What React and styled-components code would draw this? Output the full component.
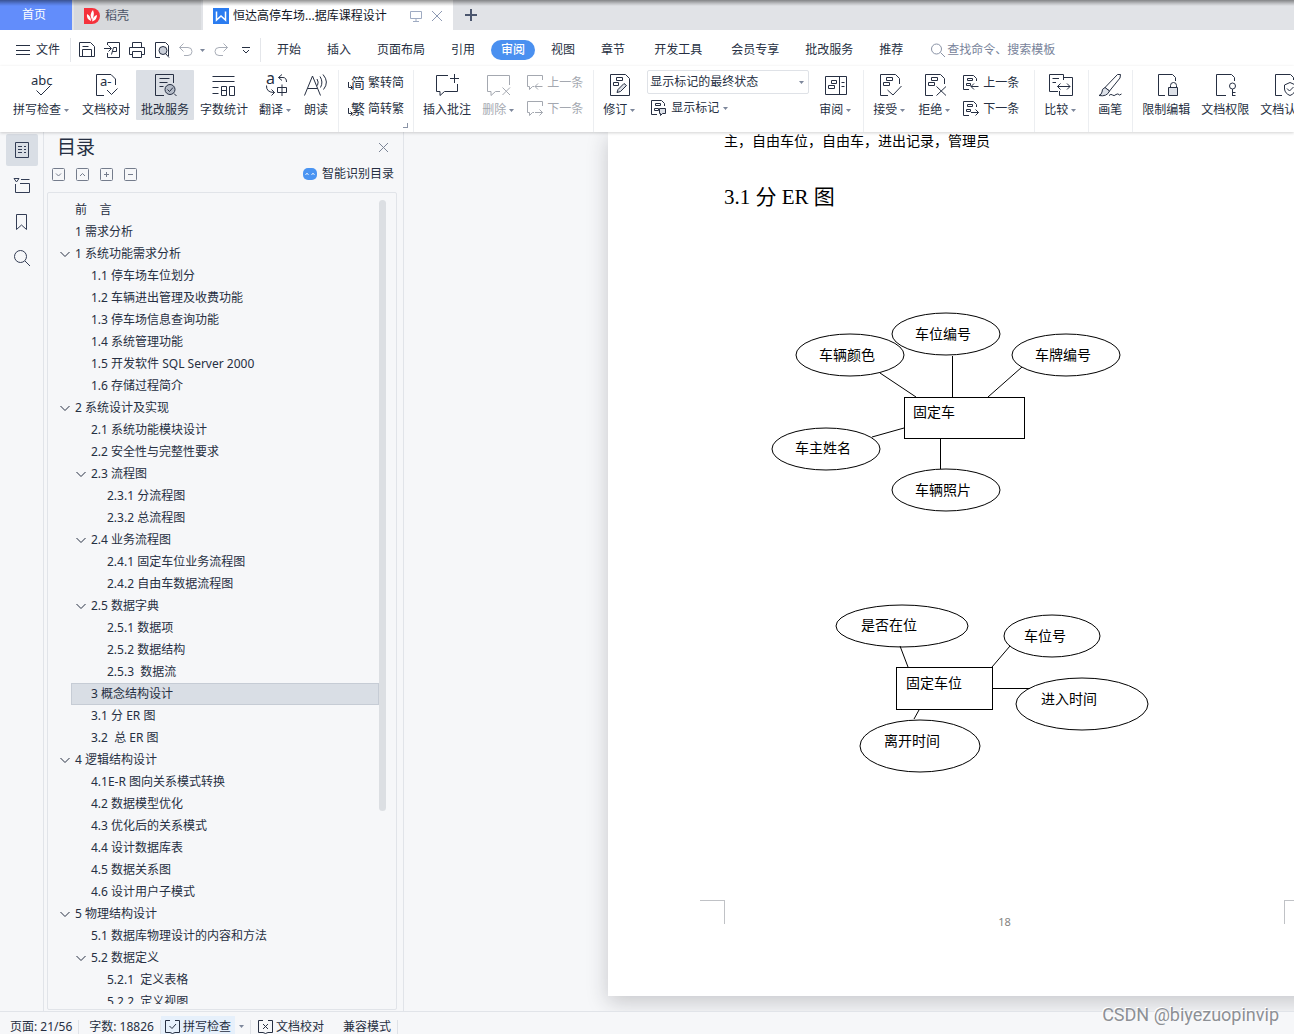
import React from "react";
import styled, { createGlobalStyle } from "styled-components";

const GlobalStyle = createGlobalStyle`
  * {
    box-sizing: border-box;
  }
  body {
    margin: 0;
    overflow: hidden;
    background: #f6f7f9;
    color: #262f42;
    font-family: "Noto Sans", "Noto Sans CJK SC", sans-serif;
    font-size: 12px;
    line-height: 16px;
  }
  button, input, select {
    font: inherit;
    color: inherit;
    border: 0;
    padding: 0;
    background: none;
  }
  button {
    white-space: nowrap;
    cursor: pointer;
  }
  svg {
    display: block;
    flex: none;
    overflow: visible;
  }
`;

const Window = styled.div`
  display: flex;
  flex-direction: column;
  height: 100vh;
  position: relative;
`;

/* ---------- title tabs ---------- */

const TabBar = styled.div`
  display: flex;
  flex: none;
  gap: 2px;
  height: 30px;
  background: #e1e3e7;
  position: relative;
`;
const TopShade = styled.div`
  position: absolute;
  top: 0;
  left: 0;
  right: 0;
  height: 6px;
  pointer-events: none;
  background: linear-gradient(rgba(0, 0, 0, 0.42), rgba(0, 0, 0, 0.15) 60%, transparent);
`;
const HomeTab = styled.button`
  width: 72px;
  padding-right: 4px;
  color: #fff;
  background: #628dfb;
`;
const Tab = styled.button`
  display: flex;
  align-items: center;
  gap: ${(p) => (p.$active ? 4 : 5)}px;
  width: ${(p) => (p.$active ? 250 : 127)}px;
  padding: 2px 10px 0;
  color: ${(p) => (p.$active ? "#10151f" : "#4a5266")};
  background: ${(p) => (p.$active ? "#fff" : "#d7d9dc")};
`;
const TabTools = styled.span`
  display: flex;
  gap: 9px;
  margin-left: auto;
`;
const NewTab = styled.button`
  padding: 0 10px;
`;

/* ---------- menu row ---------- */

const MenuBar = styled.div`
  display: flex;
  align-items: center;
  flex: none;
  height: 36px;
  padding: 4px 0 0 16px;
  background: #fff;
`;
const FileButton = styled.button`
  display: flex;
  align-items: center;
  gap: 6px;
  padding-right: 10px;
`;
const MenuDivider = styled.span`
  width: 1px;
  height: 24px;
  background: #e4e6ea;
`;
const QuickTools = styled.div`
  display: flex;
  align-items: center;
  gap: 9px;
  width: 189px;
  padding-left: 8px;
`;
const UndoGroup = styled.span`
  display: flex;
  align-items: center;
  gap: 7px;
`;
const MenuTabs = styled.nav`
  display: flex;
  align-items: center;
  padding-left: 3px;
`;
const MenuTab = styled.button`
  height: 20px;
  margin: 0 ${(p) => (p.$wide ? 3 : 0)}px;
  padding: 0 13px;
`;
const ActiveMenuTab = styled(MenuTab)`
  margin: 0 3px;
  padding: 0 10px;
  border-radius: 10px;
  color: #fff;
  font-weight: 500;
  background: #4a90f0;
`;
const Search = styled.label`
  display: flex;
  align-items: center;
  gap: 2px;
  padding-left: 15px;
  color: #8a93a6;
  input {
    width: 140px;
    outline: none;
  }
  input::placeholder {
    color: #78839a;
    opacity: 1;
  }
`;

/* ---------- ribbon ---------- */

const Ribbon = styled.div`
  display: flex;
  flex: none;
  gap: 1px;
  height: 66px;
  padding: 4px 0 0 8px;
  background: #fff;
  box-shadow: 0 1px 3px rgba(0, 0, 0, 0.18);
  position: relative;
  z-index: 1;
  > * {
    flex: none;
  }
`;
const BigButton = styled.button`
  display: flex;
  flex-direction: column;
  align-items: center;
  gap: 5px;
  height: 50px;
  padding: 3px 5px 0;
  border-radius: 1px;
  color: ${(p) => (p.$muted ? "#a4a8b0" : "inherit")};
  background: ${(p) => (p.$active ? "#dbdfe5" : "none")};
`;
const ButtonLabel = styled.span`
  display: flex;
  align-items: center;
  gap: 3px;
  padding-right: ${(p) => (p.$menu ? 2 : 0)}px;
`;
const Divider = styled.span`
  width: 1px;
  height: 62px;
  margin: 0 3px 0 4px;
  background: #eceef1;
`;
const Stack = styled.div`
  display: flex;
  flex-direction: column;
  gap: ${(p) => p.$gap || 0}px;
  padding-right: ${(p) => (p.$wide ? 5 : 0)}px;
`;
const SmallButton = styled.button`
  display: flex;
  align-items: center;
  gap: 4px;
  height: 26px;
  padding: 0 5px 0 ${(p) => (p.$indent ? 8 : 5)}px;
  color: ${(p) => (p.$muted ? "#a4a8b0" : "inherit")};
`;
const SelectBox = styled.div`
  display: flex;
  align-items: center;
  width: 162px;
  height: 24px;
  margin: 0 4px;
  padding-right: 4px;
  border: 1px solid #dfe2e7;
  border-radius: 2px;
  select {
    flex: 1;
    padding-left: 2px;
    appearance: none;
    outline: none;
  }
`;
const Launcher = styled.span`
  align-self: flex-end;
  width: 5px;
  height: 5px;
  margin: 0 0 4px -7px;
  border: solid #8a93a6;
  border-width: 0 1px 1px 0;
`;

/* ---------- work area ---------- */

const Workspace = styled.div`
  display: flex;
  flex: 1;
  min-height: 0;
`;
const Rail = styled.div`
  display: flex;
  flex-direction: column;
  align-items: center;
  gap: 4px;
  width: 44px;
  padding-top: 2px;
  border-right: 1px solid #e1e4e9;
`;
const RailButton = styled.button`
  display: grid;
  place-items: center;
  width: 32px;
  height: 32px;
  border-radius: 2px;
  color: #333d55;
  background: ${(p) => (p.$active ? "#d9dee5" : "none")};
`;
const Panel = styled.aside`
  display: flex;
  flex-direction: column;
  flex: none;
  width: 360px;
  padding: 0 6px 0 3px;
  border-right: 1px solid #e1e4e9;
`;
const PanelHead = styled.div`
  display: flex;
  align-items: center;
  justify-content: space-between;
  height: 30px;
  padding: 0 8px 0 10px;
`;
const PanelTitle = styled.h2`
  margin: 0;
  font-size: 19px;
  font-weight: 400;
  line-height: 28px;
`;
const PanelTools = styled.div`
  display: flex;
  align-items: center;
  gap: 10px;
  height: 24px;
  margin-bottom: 6px;
  padding: 0 3px 0 5px;
  color: #747c8c;
`;
const SmartButton = styled.button`
  display: flex;
  align-items: center;
  gap: 5px;
  margin-left: auto;
  color: #262f42;
`;
const OutlineBox = styled.div`
  display: flex;
  flex: 1;
  min-height: 0;
  margin-bottom: 1px;
  padding: 6px 10px 5px 12px;
  border: 1px solid #e1e4e9;
  border-radius: 2px;
`;
const Outline = styled.ul`
  flex: 1;
  margin: 0;
  padding: 0;
  list-style: none;
  overflow: hidden;
`;
const OutlineRow = styled.li`
  display: flex;
  height: 22px;
  padding-left: ${(p) => p.$depth * 16}px;
`;
const OutlineLink = styled.a`
  display: flex;
  align-items: center;
  gap: 5px;
  color: inherit;
  white-space: pre;
  text-decoration: none;
`;
const CurrentRow = styled(OutlineRow)`
  margin-left: 11px;
  padding-left: 4px;
  border: 1px solid #c6ccd5;
  background: #d9dee5;
`;
const ChevronSlot = styled.span`
  width: 10px;
`;
const ScrollTrack = styled.div`
  width: 7px;
  padding-top: 1px;
`;
const ScrollThumb = styled.div`
  height: 76%;
  border-radius: 4px;
  background: #dcdfe3;
`;

/* ---------- document ---------- */

const Canvas = styled.main`
  flex: 1;
  min-width: 0;
  padding-left: 204px;
  overflow: hidden;
`;
const Sheet = styled.article`
  width: 793px;
  padding: 0 92px;
  color: #000;
  background: #fff;
  box-shadow: 0 6px 20px rgba(30, 32, 40, 0.22);
`;
const SheetBody = styled.div`
  padding: 0 24px;
`;
const Paragraph = styled.p`
  margin: 0 0 33px;
  font-size: 14px;
  line-height: 18px;
`;
const Heading = styled.h3`
  margin: 0 0 89px;
  font-family: "Liberation Serif", "Noto Sans CJK SC", serif;
  font-size: 21px;
  font-weight: 400;
  line-height: 28px;
`;
const Diagram = styled.svg`
  margin-bottom: ${(p) => p.$after}px;
  fill: #fff;
  stroke: #000;
  text {
    fill: #000;
    stroke: none;
    font-size: 14px;
  }
`;
const SheetFooter = styled.footer`
  display: flex;
  justify-content: space-between;
  height: 96px;
`;
const CropMark = styled.span`
  width: 25px;
  height: 24px;
  border: solid #c0c2c6;
  border-width: ${(p) => (p.$right ? "1px 0 0 1px" : "1px 1px 0 0")};
`;
const PageNumber = styled.span`
  margin-top: 14px;
  color: #86837f;
  font-size: 11px;
`;

/* ---------- status bar ---------- */

const StatusBar = styled.footer`
  display: flex;
  align-items: center;
  flex: none;
  height: 23px;
  padding: 7px 0 0 10px;
  border-top: 1px solid #e1e4e9;
  background: #f6f7f9;
  white-space: nowrap;
`;
const StatusDivider = styled.span`
  width: 1px;
  height: 14px;
  margin: 0 ${(p) => p.$after}px 0 6px;
  background: #dfe2e7;
`;
const StatusButton = styled.button`
  display: flex;
  align-items: center;
  gap: 3px;
  height: 22px;
  margin-right: ${(p) => (p.$active ? 4 : 15)}px;
  padding: 0 4px;
  background: ${(p) => (p.$active ? "#e6f0fb" : "none")};
`;
const Watermark = styled.div`
  position: absolute;
  right: 15px;
  bottom: 7px;
  z-index: 2;
  color: #8d9095;
  font-family: Roboto, "Liberation Sans", sans-serif;
  font-size: 18px;
  line-height: 24px;
  text-shadow: -1px -1px 0 #fff;
`;

/* ---------- icons ---------- */

function Icon({ w = 24, h = w, children, ...rest }) {
  return (
    <svg
      width={w}
      height={h}
      viewBox={`0 0 ${w} ${h}`}
      fill="none"
      stroke="currentColor"
      aria-hidden="true"
      {...rest}
    >
      {children}
    </svg>
  );
}

function Glyph({ children, size, ...rest }) {
  return (
    <text fill="currentColor" stroke="none" fontSize={size} {...rest}>
      {children}
    </text>
  );
}

const Caret = () => (
  <Icon w={5} h={3}>
    <path d="M0 0H5L2.5 3Z" fill="#7d879b" stroke="none" />
  </Icon>
);

const docOutline = "M10 22.5H2.5V1.5H17.5L21.5 5.5V11";
const markRects = "M8.5 4.5H14.5V7.5H8.5ZM5.5 9.5H11.5V12.5H5.5Z";

const big = {
  spell: (
    <>
      <Glyph x="1" y="12" size="13">abc</Glyph>
      <path d="M6.5 17.5L11 22L20.5 12.5" />
    </>
  ),
  proof: (
    <>
      <path d="M10 22.5H2.5V1.5H17L21.5 6V12M13 17L17.5 21.5L23.5 15.5" />
      <Glyph x="6" y="13" size="13">a-</Glyph>
    </>
  ),
  correct: (
    <>
      <path d="M11 22.5H2.5V1.5H20.5V10M6.5 5.5H16.5M6.5 9.5H14.5M6.5 13.5H10.5M21 20.5L23.5 23" />
      <circle cx="17" cy="16.5" r="5" fill="#b4bbc7" />
      <path d="M14.5 16.5L16.5 18.5L20 14.5" />
    </>
  ),
  count: (
    <path d="M0.5 3.5H22.5M0.5 8.5H22.5M0.5 14.5H6.5M0.5 20.5H6.5M9.5 13.5H14.5V22.5H9.5ZM9.5 17.5H14.5M17.5 13.5H22.5V22.5H17.5Z" />
  ),
  translate: (
    <>
      <Glyph x="2" y="11" size="16">a</Glyph>
      <path d="M18 1.5L14.5 4.5L18 7.5M14.5 4.5H19Q22.5 4.5 22.5 9M2.5 12.5Q2 19.5 10.5 19.5M7.5 16.5L10.5 19.5L7.5 22.5M13.5 14.5H22.5V19.5H13.5ZM18 11.5V23" />
    </>
  ),
  read: (
    <path d="M0.5 22.5L8.5 3L16.5 22.5M3.5 15.5H13.5M13 6Q15 9 13.5 12.5M16 3.5Q19.5 9 16.5 14.5M19 1.5Q25.5 9 19.5 16.5" />
  ),
  comment: (
    <path d="M13 2.5H1.5V18.5H5V22.5L9.5 18.5H22.5V11M19.5 1V10M15 5.5H24" />
  ),
  deleteComment: (
    <path d="M22.5 12V2.5H0.5V18.5H4V22.5L8.5 18.5H13M15.5 14.5L23 22M23 14.5L15.5 22" />
  ),
  revise: (
    <>
      <path d="M2.5 1.5H17.5L21.5 5.5V22.5H2.5ZM8.5 4.5H14.5V7.5H8.5ZM5.5 9.5H10.5V12.5H5.5Z" />
      <path d="M9 19.5L10 16.5L16 10.5L18.5 12.5L12.5 18.5Z" fill="#dde1e8" />
    </>
  ),
  review: (
    <path d="M1.5 3.5H22.5V21.5H1.5ZM15.5 3.5V21.5M17.5 9.5H20.5M17.5 13.5H20.5M7.5 7.5H12.5V10.5H7.5ZM4.5 12.5H10.5V15.5H4.5Z" />
  ),
  accept: <path d={`${docOutline}${markRects}M9.5 17L15 22L23.5 13`} />,
  reject: <path d={`${docOutline}${markRects}M13.5 13.5L23 22.5M23 13.5L13.5 22.5`} />,
  compare: (
    <path d="M9 18.5H0.5V1.5H14.5V7M14.5 4.5H23.5V22.5H10.5V18M3.5 5.5H10M3.5 9.5H7M8.5 13.5H21M11.5 10.5L8.5 13.5L11.5 16.5M18 10.5L21 13.5L18 16.5" />
  ),
  pen: (
    <>
      <path d="M7 14.5L19.5 1.5L22.5 1.5L22 5L11.5 18M7 14.5L11.5 18" />
      <path d="M7 14.5Q3.5 16 4 19Q3.5 21.5 1 22.5Q9 24 11.5 18Z" fill="#dde1e8" />
      <path d="M11 22.5Q13 20.5 14.5 22Q16 23.5 18 21.5Q20 20 21.5 22L23.5 21" />
    </>
  ),
  lock: (
    <>
      <path d="M11 22.5H4.5V1.5H18.5L21.5 4.5V8M16.5 14.5V12.5A3 3 0 0 1 22.5 12.5V14.5" />
      <path d="M14.5 14.5H23.5V22.5H14.5Z" fill="#dde1e8" />
    </>
  ),
  key: (
    <path d="M13 22.5H3.5V1.5H18.5L21.5 4.5V8M19.5 16V23M19.5 19.5H22.5M19.5 22.5H22.5M16.5 13A3 3 0 1 0 22.5 13A3 3 0 1 0 16.5 13" />
  ),
  shield: (
    <path d="M10 22.5H3.5V1.5H18.5L21.5 4.5V7M18 9.5L23.5 12V16Q23 20.5 18 22.5Q13 20.5 12.5 16V12ZM15 15.5L17.5 18L21.5 14" />
  ),
};

const smallComment = "M15.5 5V0.5H0.5V11.5H2.5V14.5L5.5 11.5H7";
const smallDoc = "M6 14.5H0.5V0.5H10.5L13.5 3.5V6M4.5 3.5H9.5V5.5H4.5ZM3.5 8.5H7.5V10.5H3.5Z";
const leftArrow = "M15.5 11.5H8M11 8.5L8 11.5L11 14.5";
const rightArrow = "M8 11.5H15.5M12.5 8.5L15.5 11.5L12.5 14.5";
const convertArrow = "M0.5 7V12.5H4M2.5 10.5L4.5 12.5L2.5 14.5";

const small = {
  toSimple: (
    <>
      <Glyph x="3" y="13" size="14">简</Glyph>
      <path d={convertArrow} />
    </>
  ),
  toTraditional: (
    <>
      <Glyph x="3" y="13" size="14">繁</Glyph>
      <path d={convertArrow} />
    </>
  ),
  prevComment: <path d={smallComment + leftArrow} />,
  nextComment: <path d={smallComment + rightArrow} />,
  prevChange: <path d={smallDoc + leftArrow} />,
  nextChange: <path d={smallDoc + rightArrow} />,
  markup: (
    <>
      <path d={smallDoc} />
      <path d="M8.5 8.5H14.5V13.5H11.5L9.5 15.5V13.5H8.5Z" fill="#dde1e8" />
    </>
  ),
};

const quick = [
  ["保存", <path d="M0.5 14.5V0.5H11.5L15.5 4.5V14.5ZM3.5 14.5V7.5H12.5V14.5M3.5 4.5H9.5" />],
  ["输出为PDF", <path d="M3.5 3V0.5H15.5V15.5H3.5V11M0 6.5H7M4.5 3.5L7.5 6.5L4.5 9.5M7.5 12.5L9.5 5.5H12.5V9.5H8.5" />],
  ["打印", <path d="M3.5 5V0.5H12.5V5M3.5 12.5H0.5V5.5H15.5V12.5H12.5M3.5 9.5H12.5V15.5H3.5Z" />],
  [
    "打印预览",
    <>
      <path d="M6 15.5H1.5V0.5H11.5L14.5 3.5V14M12 12L15 15.5" />
      <circle cx="9" cy="8.5" r="4" fill="#c9ced8" />
    </>,
  ],
];

const squares = [
  ["展开", "M4 5.5L6.5 8L9 5.5"],
  ["收起", "M4 8L6.5 5.5L9 8"],
  ["增加", "M6.5 4V9M4 6.5H9"],
  ["减少", "M4 6.5H9"],
];

const railIcons = [
  ["目录", <path d="M2.5 1.5H15.5V16.5H2.5ZM5 5.5H9M5 8.5H9M5 11.5H9M11 5.5H13M11 8.5H13M11 11.5H13" />],
  ["章节", <path d="M1 1.5H6L3.5 5ZM8 2.5H16.5M2.5 7V15.5H16.5V6.5H7" />],
  ["书签", <path d="M3.5 1.5H13.5V16.5L8.5 12L3.5 16.5Z" />],
  ["查找", <path d="M1.5 7.5A6 6 0 1 0 13.5 7.5A6 6 0 1 0 1.5 7.5M12 12L17 17" />],
];

/* ---------- data ---------- */

// [depth, title, expandable, current]
const outline = [
  [0, "前    言"],
  [0, "1 需求分析"],
  [0, "1 系统功能需求分析", true],
  [1, "1.1 停车场车位划分"],
  [1, "1.2 车辆进出管理及收费功能"],
  [1, "1.3 停车场信息查询功能"],
  [1, "1.4 系统管理功能"],
  [1, "1.5 开发软件 SQL Server 2000"],
  [1, "1.6 存储过程简介"],
  [0, "2 系统设计及实现", true],
  [1, "2.1 系统功能模块设计"],
  [1, "2.2 安全性与完整性要求"],
  [1, "2.3 流程图", true],
  [2, "2.3.1 分流程图"],
  [2, "2.3.2 总流程图"],
  [1, "2.4 业务流程图", true],
  [2, "2.4.1 固定车位业务流程图"],
  [2, "2.4.2 自由车数据流程图"],
  [1, "2.5 数据字典", true],
  [2, "2.5.1 数据项"],
  [2, "2.5.2 数据结构"],
  [2, "2.5.3  数据流"],
  [1, "3 概念结构设计", false, true],
  [1, "3.1 分 ER 图"],
  [1, "3.2  总 ER 图"],
  [0, "4 逻辑结构设计", true],
  [1, "4.1E-R 图向关系模式转换"],
  [1, "4.2 数据模型优化"],
  [1, "4.3 优化后的关系模式"],
  [1, "4.4 设计数据库表"],
  [1, "4.5 数据关系图"],
  [1, "4.6 设计用户子模式"],
  [0, "5 物理结构设计", true],
  [1, "5.1 数据库物理设计的内容和方法"],
  [1, "5.2 数据定义", true],
  [2, "5.2.1  定义表格"],
  [2, "5.2.2  定义视图"],
];

const fixedCar = {
  height: 220,
  box: { x: 180.5, y: 97.5, width: 120, height: 41 },
  label: ["固定车", 189, 117],
  lines: "M156 73L192 97M228.5 56V97M298 67L264 97M180 128L148 137M216.5 138V169",
  // [text, cx, cy, rx, ry, textX, baseline]
  nodes: [
    ["车辆颜色", 126, 55, 54, 21, 95, 60],
    ["车位编号", 222, 34, 54, 21, 191, 39],
    ["车牌编号", 342, 55, 54, 21, 311, 60],
    ["车主姓名", 102, 149, 54, 21, 71, 153],
    ["车辆照片", 222, 190, 54, 21, 191, 195],
  ],
};

const fixedSpace = {
  height: 190,
  box: { x: 172.5, y: 77.5, width: 96, height: 42 },
  label: ["固定车位", 182, 98],
  lines: "M176 56L184 77M286 56L268 77M269 98.5H306M195 120L190 129",
  nodes: [
    ["是否在位", 178, 36, 66, 21, 137, 40],
    ["车位号", 328, 46, 48, 21, 300, 51],
    ["进入时间", 358, 114, 66, 26, 317, 114],
    ["离开时间", 196, 156, 60, 26, 160, 156],
  ],
};

/* ---------- components ---------- */

function Tool({ icon, label, menu, ...rest }) {
  return (
    <BigButton {...rest}>
      <Icon>{big[icon]}</Icon>
      <ButtonLabel $menu={menu}>
        {label}
        {menu && <Caret />}
      </ButtonLabel>
    </BigButton>
  );
}

function SmallTool({ icon, label, menu, ...rest }) {
  return (
    <SmallButton {...rest}>
      <Icon w={16}>{small[icon]}</Icon>
      {label}
      {menu && <Caret />}
    </SmallButton>
  );
}

function ErDiagram({ data, after }) {
  const [name, x, y] = data.label;
  return (
    <Diagram width="440" height={data.height} $after={after} role="img" aria-label={name}>
      <path d={data.lines} />
      {data.nodes.map(([text, cx, cy, rx, ry, tx, ty]) => (
        <g key={text}>
          <ellipse cx={cx} cy={cy} rx={rx} ry={ry} fill="none" />
          <text x={tx} y={ty}>{text}</text>
        </g>
      ))}
      <rect {...data.box} />
      <text x={x} y={y}>{name}</text>
    </Diagram>
  );
}

function OutlineItem({ item }) {
  const [depth, title, expandable, current] = item;
  const Row = current ? CurrentRow : OutlineRow;
  return (
    <Row $depth={depth}>
      <OutlineLink href="#" aria-current={current}>
        <ChevronSlot>
          {expandable && (
            <Icon w={10}>
              <path d="M0.5 3L5 7.5L9.5 3" />
            </Icon>
          )}
        </ChevronSlot>
        {title}
      </OutlineLink>
    </Row>
  );
}

function App() {
  return (
    <Window>
      <GlobalStyle />
      <TabBar>
        <HomeTab>首页</HomeTab>
        <Tab>
          <Icon w={16}>
            <path d="M0 0H8A8 8 0 0 1 8 16H0Z" fill="#f5323c" stroke="none" />
            <path
              d="M7 13Q2 11 3 6Q7 8 7 13ZM8 12Q5 6 9 2Q11 7 8 12ZM8 13.5Q9 8 13 7Q13 12 8 13.5Z"
              fill="#fff"
              stroke="none"
            />
          </Icon>
          稻壳
        </Tab>
        <Tab $active>
          <Icon w={16}>
            <path d="M0 0H16V16H0Z" fill="#2b7cf0" stroke="none" />
            <path d="M3.5 3.5V12L8 8L12.5 12V3.5" stroke="#fff" strokeWidth="1.5" />
          </Icon>
          恒达高停车场...据库课程设计
          <TabTools>
            <Icon w={12} color="#9fabc2">
              <path d="M0.5 1.5H11.5V8.5H0.5ZM6 8.5V11.5M3 11.5H9" />
            </Icon>
            <Icon w={12} color="#8d99b3">
              <path d="M1 1L11 11M11 1L1 11" />
            </Icon>
          </TabTools>
        </Tab>
        <NewTab aria-label="新建">
          <Icon w={12}>
            <path d="M6 0V12M0 6H12" stroke="#4b566e" strokeWidth="2" />
          </Icon>
        </NewTab>
        <TopShade />
      </TabBar>

      <MenuBar>
        <FileButton>
          <Icon w={14}>
            <path d="M0 2.5H14M0 7.5H14M0 11.5H14" />
          </Icon>
          文件
        </FileButton>
        <MenuDivider />
        <QuickTools>
          {quick.map(([label, shape]) => (
            <button key={label} aria-label={label}>
              <Icon w={16}>{shape}</Icon>
            </button>
          ))}
          <UndoGroup>
            <button aria-label="撤销">
              <Icon w={14} color="#a9aeb8">
                <path d="M4.5 0.5L0.5 4.5L4.5 8.5M0.5 4.5H9A4 4 0 0 1 9 12.5H5" />
              </Icon>
            </button>
            <Caret />
          </UndoGroup>
          <button aria-label="恢复">
            <Icon w={14} color="#a9aeb8">
              <path d="M9.5 0.5L13.5 4.5L9.5 8.5M13.5 4.5H5A4 4 0 0 0 5 12.5H9" />
            </Icon>
          </button>
          <button aria-label="自定义快速访问">
            <Icon w={16} h={8}>
              <path d="M5 1.5H13M6 4L9 7L12 4" />
            </Icon>
          </button>
        </QuickTools>
        <MenuDivider />
        <MenuTabs>
          <MenuTab>开始</MenuTab>
          <MenuTab>插入</MenuTab>
          <MenuTab>页面布局</MenuTab>
          <MenuTab>引用</MenuTab>
          <ActiveMenuTab>审阅</ActiveMenuTab>
          <MenuTab>视图</MenuTab>
          <MenuTab>章节</MenuTab>
          <MenuTab $wide>开发工具</MenuTab>
          <MenuTab>会员专享</MenuTab>
          <MenuTab>批改服务</MenuTab>
          <MenuTab>推荐</MenuTab>
        </MenuTabs>
        <Search>
          <Icon w={14}>
            <path d="M0.5 6A5 5 0 1 0 10.5 6A5 5 0 1 0 0.5 6M9.5 9.5L14 14" />
          </Icon>
          <input placeholder="查找命令、搜索模板" aria-label="查找命令" />
        </Search>
      </MenuBar>

      <Ribbon>
        <Tool icon="spell" label="拼写检查" menu />
        <Tool icon="proof" label="文档校对" />
        <Tool icon="correct" label="批改服务" $active />
        <Tool icon="count" label="字数统计" />
        <Tool icon="translate" label="翻译" menu />
        <Tool icon="read" label="朗读" />
        <Divider />
        <Stack>
          <SmallTool icon="toSimple" label="繁转简" />
          <SmallTool icon="toTraditional" label="简转繁" />
        </Stack>
        <Launcher />
        <Divider />
        <Tool icon="comment" label="插入批注" />
        <Tool icon="deleteComment" label="删除" menu $muted />
        <Stack>
          <SmallTool icon="prevComment" label="上一条" $muted />
          <SmallTool icon="nextComment" label="下一条" $muted />
        </Stack>
        <Divider />
        <Tool icon="revise" label="修订" menu />
        <Stack $gap={1}>
          <SelectBox>
            <select aria-label="显示状态">
              <option>显示标记的最终状态</option>
            </select>
            <Caret />
          </SelectBox>
          <SmallTool icon="markup" label="显示标记" menu $indent />
        </Stack>
        <Tool icon="review" label="审阅" menu />
        <Divider />
        <Tool icon="accept" label="接受" menu />
        <Tool icon="reject" label="拒绝" menu />
        <Stack $wide>
          <SmallTool icon="prevChange" label="上一条" />
          <SmallTool icon="nextChange" label="下一条" />
        </Stack>
        <Divider />
        <Tool icon="compare" label="比较" menu />
        <Divider />
        <Tool icon="pen" label="画笔" />
        <Divider />
        <Tool icon="lock" label="限制编辑" />
        <Tool icon="key" label="文档权限" />
        <Tool icon="shield" label="文档认证" />
      </Ribbon>

      <Workspace>
        <Rail>
          {railIcons.map(([label, shape], i) => (
            <RailButton key={label} aria-label={label} $active={i === 0}>
              <Icon w={18}>{shape}</Icon>
            </RailButton>
          ))}
        </Rail>
        <Panel>
          <PanelHead>
            <PanelTitle>目录</PanelTitle>
            <button aria-label="关闭">
              <Icon w={11} color="#7c8597">
                <path d="M1 1L10 10M10 1L1 10" />
              </Icon>
            </button>
          </PanelHead>
          <PanelTools>
            {squares.map(([label, d]) => (
              <button key={label} aria-label={label}>
                <Icon w={14} h={13}>
                  <rect x="0.5" y="0.5" width="12" height="12" rx="1" />
                  <path d={d} />
                </Icon>
              </button>
            ))}
            <SmartButton>
              <Icon w={14} h={12}>
                <rect width="14" height="12" rx="5" fill="#4a94f2" stroke="none" />
                <path d="M2.5 6.5Q4 4.5 5.5 6.5M8.5 6.5Q10 4.5 11.5 6.5" stroke="#fff" />
              </Icon>
              智能识别目录
            </SmartButton>
          </PanelTools>
          <OutlineBox>
            <Outline>
              {outline.map((item) => (
                <OutlineItem key={item[1]} item={item} />
              ))}
            </Outline>
            <ScrollTrack>
              <ScrollThumb />
            </ScrollTrack>
          </OutlineBox>
        </Panel>

        <Canvas>
          <Sheet>
            <SheetBody>
              <Paragraph>主，自由车位，自由车，进出记录，管理员</Paragraph>
              <Heading>3.1 分 ER 图</Heading>
              <ErDiagram data={fixedCar} after={70} />
              <ErDiagram data={fixedSpace} after={120} />
            </SheetBody>
            <SheetFooter>
              <CropMark />
              <PageNumber>18</PageNumber>
              <CropMark $right />
            </SheetFooter>
          </Sheet>
        </Canvas>
      </Workspace>

      <StatusBar>
        <span>页面: 21/56</span>
        <StatusDivider $after={10} />
        <span>字数: 18826</span>
        <StatusDivider $after={0} />
        <StatusButton $active>
          <Icon w={15}>
            <path d="M5 1.5H0.5V13.5H5L7.5 14.5L10 13.5H14.5V1.5H10M4.5 7L7 9.5L11 5" />
          </Icon>
          拼写检查
        </StatusButton>
        <Caret />
        <StatusDivider $after={3} />
        <StatusButton>
          <Icon w={15}>
            <path d="M5 1.5H0.5V13.5H5L7.5 14.5L10 13.5H14.5V1.5H10M5 5L10 10M10 5L5 10" />
          </Icon>
          文档校对
        </StatusButton>
        <span>兼容模式</span>
        <StatusDivider $after={0} />
      </StatusBar>
      <Watermark>CSDN @biyezuopinvip</Watermark>
    </Window>
  );
}

export default App;
